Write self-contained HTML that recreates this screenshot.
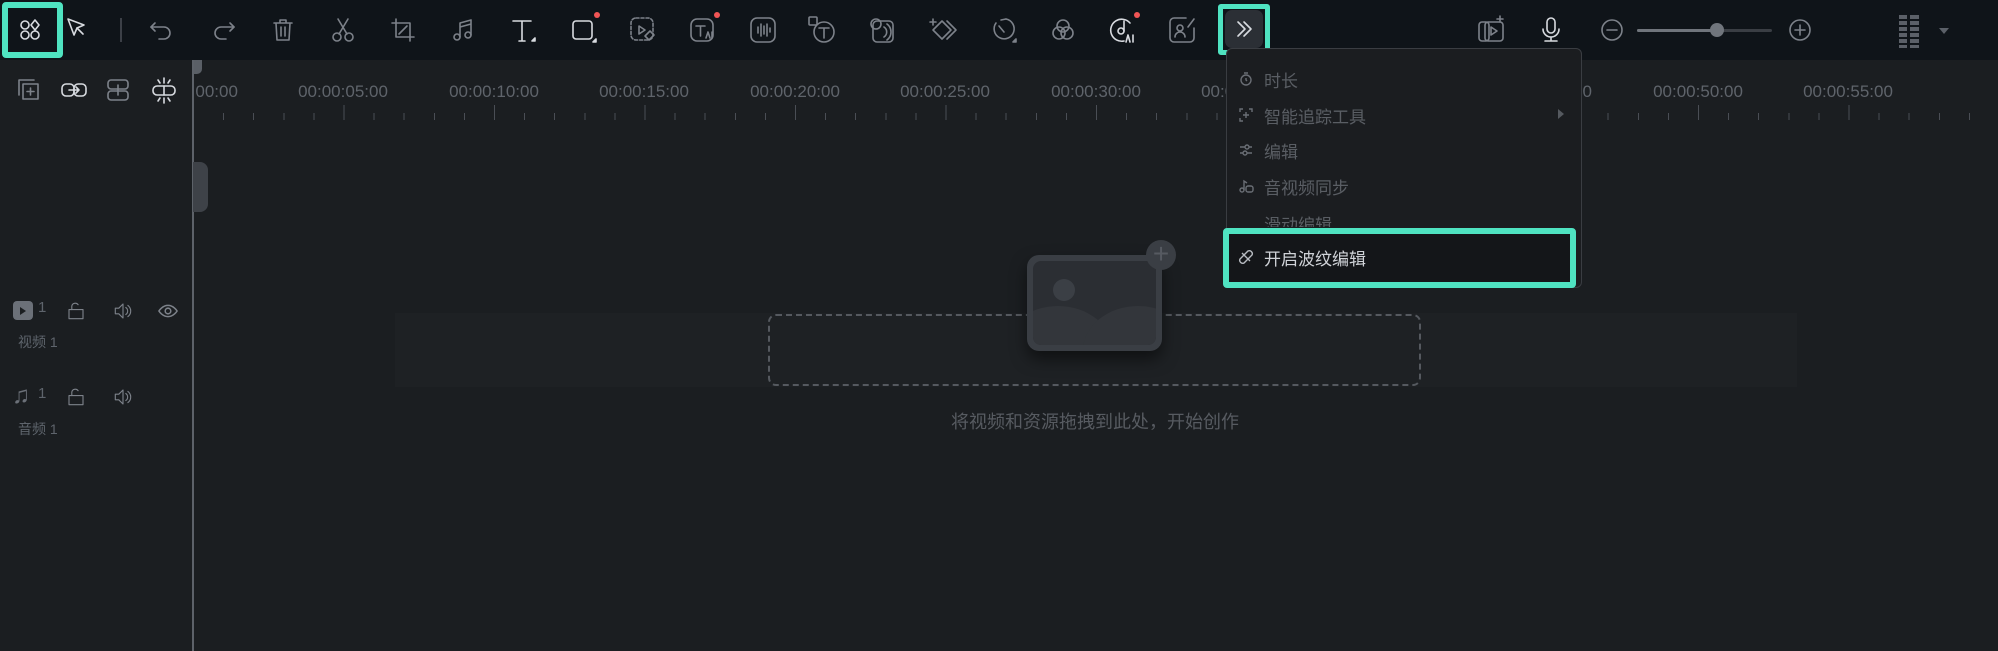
<!DOCTYPE html>
<html><head><meta charset="utf-8"><style>
*{margin:0;padding:0;box-sizing:border-box}
body{width:1998px;height:651px;background:#1b1e21;overflow:hidden;position:relative;font-family:"Liberation Sans","Noto Sans CJK SC",sans-serif}
.tb{position:absolute;left:0;top:0;width:1998px;height:60px;background:#0f1419}
.ic{position:absolute;width:30px;height:30px}
.ic svg{width:30px;height:30px;fill:none;stroke:#7d828a;stroke-width:1.6;stroke-linecap:round;stroke-linejoin:round}
.w svg{stroke:#d8dbe0}
.dot{position:absolute;width:6px;height:6px;border-radius:50%;background:#f05555}
.lbl{position:absolute;top:22px;color:#5f646b;font-size:17px;width:120px;text-align:center}
.menu{position:absolute;left:1226px;top:48px;width:356px;height:240px;background:#1b1d20;border:1px solid #3a3d42;border-radius:6px}
.mi{position:absolute;left:1264px;color:#5a5e64;font-size:17px}
.mic{position:absolute;left:1238px;width:16px;height:16px}
.mic svg{width:16px;height:16px;fill:none;stroke:#6a6e75;stroke-width:1.4}
.trk{position:absolute;color:#5e646c;font-size:14px}
</style></head><body>
<div class="tb"></div>
<div style="position:absolute;left:2px;top:2px;width:61px;height:56px;border:6px solid #4fe3c1;border-radius:4px;background:#0f1419"></div>
<div class="ic w" style="left:15px;top:15px"><svg viewBox="0 0 30 30"><circle cx="10" cy="10" r="4"/><path d="M20 5l4 5-4 5-4-5z"/><circle cx="10" cy="20" r="4"/><circle cx="20" cy="20" r="4"/></svg></div>
<div class="ic w" style="left:64px;top:15px"><svg viewBox="0 0 30 30"><path d="M4 4l16 6-7 3-3 7z"/><path d="M13 13l6 6"/></svg></div>
<div style="position:absolute;left:120px;top:18px;width:2px;height:24px;background:#3c4047"></div>
<div class="ic" style="left:147px;top:15px"><svg viewBox="0 0 30 30"><path d="M8 8l-4 4 4 4"/><path d="M4 12h13a6 6 0 010 12h-5"/></svg></div>
<div class="ic" style="left:208px;top:15px"><svg viewBox="0 0 30 30"><path d="M22 8l4 4-4 4"/><path d="M26 12H13a6 6 0 000 12h5"/></svg></div>
<div class="ic" style="left:268px;top:15px"><svg viewBox="0 0 30 30"><path d="M6 8h18M12 8V5h6v3M8 8l1 17h12l1-17M13 12v9M17 12v9"/></svg></div>
<div class="ic" style="left:328px;top:15px"><svg viewBox="0 0 30 30"><circle cx="9" cy="22" r="4"/><circle cx="21" cy="22" r="4"/><path d="M11 19L20 4M19 19L10 4"/></svg></div>
<div class="ic" style="left:388px;top:15px"><svg viewBox="0 0 30 30"><path d="M8 4v18h18M4 8h18v18M11 19l8-8"/></svg></div>
<div class="ic" style="left:448px;top:15px"><svg viewBox="0 0 30 30"><circle cx="9" cy="22" r="3"/><circle cx="20" cy="20" r="3"/><path d="M12 22V8l11-3v15M12 12l11-3"/></svg></div>
<div class="ic w" style="left:508px;top:15px"><svg viewBox="0 0 30 30"><path d="M5 6h18M14 6v20M11 26h6"/><path d="M24 26l3-3v3z" fill="#d8dbe0"/></svg></div>
<div class="ic w" style="left:569px;top:15px"><svg viewBox="0 0 30 30"><rect x="4" y="6" width="19" height="18" rx="3"/><path d="M24 27l3-3v3z" fill="#d8dbe0"/></svg></div>
<div class="dot" style="left:594px;top:12px"></div>
<div class="ic" style="left:628px;top:15px"><svg viewBox="0 0 30 30"><rect x="3" y="3" width="22" height="22" rx="5" stroke-dasharray="3 2"/><path d="M11 11l6 4-6 4z"/><path d="M17 21l5-5 4 4-5 5z"/></svg></div>
<div class="ic" style="left:688px;top:15px"><svg viewBox="0 0 30 30"><rect x="3" y="4" width="22" height="22" rx="6"/><path d="M8 11h9M12.5 11v10"/><path d="M18 23l2-6 2 6M24 17v6"/></svg></div>
<div class="dot" style="left:714px;top:12px"></div>
<div class="ic" style="left:748px;top:15px"><svg viewBox="0 0 30 30"><rect x="3" y="3" width="24" height="24" rx="6"/><path d="M10 12v6M13 9v12M16 11v8M19 9v12M22 13v4"/></svg></div>
<div class="ic" style="left:807px;top:15px"><svg viewBox="0 0 30 30"><rect x="2" y="2" width="8" height="8" rx="1"/><circle cx="17" cy="17" r="10"/><path d="M12 13h10M17 13v10"/></svg></div>
<div class="ic" style="left:867px;top:15px"><svg viewBox="0 0 30 30"><circle cx="9" cy="9" r="5"/><rect x="6" y="6" width="20" height="21" rx="4"/><path d="M17 12a6 6 0 010 10M20 9a10 10 0 010 16"/></svg></div>
<div class="ic" style="left:928px;top:15px"><svg viewBox="0 0 30 30"><path d="M5 4v6M2 7h6"/><path d="M14 6l9 9-9 9-9-9z"/><path d="M19 6l9 9-9 9"/></svg></div>
<div class="ic" style="left:988px;top:15px"><svg viewBox="0 0 30 30"><path d="M8 8a10 10 0 1010-4"/><path d="M13 5l5-1"/><path d="M11 11l5 6"/><path d="M25 27l3-3v3z" fill="#7d828a"/></svg></div>
<div class="ic" style="left:1048px;top:15px"><svg viewBox="0 0 30 30"><circle cx="15" cy="11" r="6"/><circle cx="11" cy="18" r="6"/><circle cx="19" cy="18" r="6"/></svg></div>
<div class="ic w" style="left:1108px;top:15px"><svg viewBox="0 0 30 30"><path d="M22 8A11 11 0 1016 26"/><circle cx="13" cy="16" r="3"/><path d="M16 16V6"/><path d="M18 27l2-7 2 7M25 20v7"/></svg></div>
<div class="dot" style="left:1134px;top:12px"></div>
<div class="ic" style="left:1167px;top:15px"><svg viewBox="0 0 30 30"><path d="M19 3H7a4 4 0 00-4 4v16a4 4 0 004 4h16a4 4 0 004-4V13"/><circle cx="13" cy="13" r="3"/><path d="M8 22a5 5 0 0110 0M21 12l6-8"/></svg></div>
<div style="position:absolute;left:1218px;top:4px;width:52px;height:51px;border:5px solid #4fe3c1;border-radius:3px;background:#0f1419"></div>
<div style="position:absolute;left:1225px;top:10px;width:38px;height:38px;border-radius:7px;background:#2b2f35"></div>
<div class="ic w" style="left:1229px;top:14px"><svg viewBox="0 0 30 30"><path d="M9 8l7 7-7 7M15 8l7 7-7 7"/></svg></div>
<div class="ic" style="left:1476px;top:15px"><svg viewBox="0 0 30 30"><rect x="3" y="7" width="10" height="19" rx="3"/><rect x="9" y="7" width="18" height="19" rx="3"/><path d="M15 12l6 4-6 4z M24 1v6M21 4h6"/></svg></div>
<div class="ic w" style="left:1536px;top:15px"><svg viewBox="0 0 30 30"><rect x="11" y="3" width="8" height="15" rx="4"/><path d="M7 14a8 8 0 0016 0M15 22v3M9 26h12"/></svg></div>
<div class="ic" style="left:1597px;top:15px"><svg viewBox="0 0 30 30"><circle cx="15" cy="15" r="10"/><path d="M10 15h10"/></svg></div>
<div style="position:absolute;left:1637px;top:29px;width:135px;height:3px;background:#3a3e44;border-radius:2px"></div>
<div style="position:absolute;left:1637px;top:29px;width:80px;height:3px;background:#70757c;border-radius:2px"></div>
<div style="position:absolute;left:1710px;top:23px;width:14px;height:14px;border-radius:50%;background:#70757c"></div>
<div class="ic" style="left:1785px;top:15px"><svg viewBox="0 0 30 30"><circle cx="15" cy="15" r="10"/><path d="M10 15h10M15 10v10"/></svg></div>
<div style="position:absolute;left:1899px;top:15px;width:20px;height:33px;background:repeating-linear-gradient(#5b6068 0 4px,transparent 4px 6px);"><div style="position:absolute;left:8px;top:0;width:3px;height:33px;background:#0f1419"></div></div>
<div style="position:absolute;left:1939px;top:28px;border:5px solid transparent;border-top:6px solid #5b6068"></div>
<div class="ic" style="left:14px;top:75px"><svg viewBox="0 0 30 30"><path d="M5 20V5h15"/><rect x="9" y="9" width="15" height="15"/><path d="M16.5 13v7M13 16.5h7"/></svg></div>
<div class="ic w" style="left:59px;top:75px"><svg viewBox="0 0 30 30"><rect x="3" y="9" width="12" height="12" rx="4"/><rect x="15" y="9" width="12" height="12" rx="4"/><path d="M10 15h10M17 12l3 3-3 3"/></svg></div>
<div class="ic" style="left:104px;top:75px"><svg viewBox="0 0 30 30"><rect x="4" y="5" width="20" height="9" rx="3"/><rect x="4" y="16" width="20" height="9" rx="3"/><path d="M14 10v10"/></svg></div>
<div class="ic w" style="left:149px;top:75px"><svg viewBox="0 0 30 30"><rect x="4" y="11" width="22" height="9" rx="4"/><path d="M15 11v9M15 3v5M15 23v5M9 5l2 3M21 5l-2 3M9 26l2-3M21 26l-2-3"/></svg></div>
<div style="position:absolute;left:193px;top:60px;width:1805px;height:70px;overflow:hidden">
<div style="position:absolute;left:0;top:0;width:9px;height:14px;background:#5a5f66;border-radius:0 0 5px 0"></div>
<div class="lbl" style="left:-60px">00:00:00:00</div>
<div class="lbl" style="left:90px">00:00:05:00</div>
<div class="lbl" style="left:241px">00:00:10:00</div>
<div class="lbl" style="left:391px">00:00:15:00</div>
<div class="lbl" style="left:542px">00:00:20:00</div>
<div class="lbl" style="left:692px">00:00:25:00</div>
<div class="lbl" style="left:843px">00:00:30:00</div>
<div class="lbl" style="left:993px">00:00:35:00</div>
<div class="lbl" style="left:1144px">00:00:40:00</div>
<div class="lbl" style="left:1294px">00:00:45:00</div>
<div class="lbl" style="left:1445px">00:00:50:00</div>
<div class="lbl" style="left:1595px">00:00:55:00</div>
<div style="position:absolute;left:0;top:53px;width:1805px;height:7px;background:repeating-linear-gradient(90deg,#4a4e55 0 1px,transparent 1px 30.1px)"></div>
<div style="position:absolute;left:0;top:45px;width:1805px;height:15px;background:repeating-linear-gradient(90deg,#4a4e55 0 1px,transparent 1px 150.5px)"></div>
</div>
<div style="position:absolute;left:192px;top:60px;width:2px;height:591px;background:#5d6269"></div>
<div style="position:absolute;left:193px;top:162px;width:15px;height:50px;background:#3e4248;border-radius:0 8px 8px 0"></div>
<div style="position:absolute;left:13px;top:301px;width:20px;height:19px;border-radius:4px;background:#6b7078"></div>
<div style="position:absolute;left:20px;top:307px;border:4px solid transparent;border-left:6px solid #1b1e21"></div>
<div class="trk" style="left:38px;top:299px;font-size:15px">1</div>
<div class="ic" style="left:61px;top:296px;transform:scale(.7)"><svg viewBox="0 0 30 30"><rect x="5" y="13" width="20" height="13"/><path d="M9 13V8a5 5 0 019-2"/></svg></div>
<div class="ic" style="left:108px;top:296px;transform:scale(.7)"><svg viewBox="0 0 30 30"><path d="M4 11h5l6-6v20l-6-6H4z M19 10a6 6 0 010 10M22 7a10 10 0 010 16"/></svg></div>
<div class="ic" style="left:153px;top:296px;transform:scale(.7)"><svg viewBox="0 0 30 30" style="stroke-width:2.2"><path d="M2 15s5-8 13-8 13 8 13 8-5 8-13 8S2 15 2 15z"/><circle cx="15" cy="15" r="4"/></svg></div>
<div class="trk" style="left:18px;top:332px">视频 1</div>
<div style="position:absolute;left:12px;top:383px;font-size:24px;color:#6b7078;line-height:26px">♫</div>
<div class="trk" style="left:38px;top:385px;font-size:15px">1</div>
<div class="ic" style="left:61px;top:382px;transform:scale(.7)"><svg viewBox="0 0 30 30"><rect x="5" y="13" width="20" height="13"/><path d="M9 13V8a5 5 0 019-2"/></svg></div>
<div class="ic" style="left:108px;top:382px;transform:scale(.7)"><svg viewBox="0 0 30 30"><path d="M4 11h5l6-6v20l-6-6H4z M19 10a6 6 0 010 10M22 7a10 10 0 010 16"/></svg></div>
<div class="trk" style="left:18px;top:419px">音频 1</div>
<div style="position:absolute;left:395px;top:313px;width:1402px;height:74px;background:#1e2124"></div>
<div style="position:absolute;left:768px;top:314px;width:653px;height:72px;border:2px dashed #55595f;border-radius:8px"></div>
<div style="position:absolute;left:1027px;top:255px;width:135px;height:96px;border-radius:12px;background:#3a3e44;box-shadow:0 8px 16px rgba(0,0,0,.5)"></div>
<div style="position:absolute;left:1033px;top:261px;width:123px;height:84px;border-radius:8px;background:#2b2e33;overflow:hidden">
<div style="position:absolute;left:20px;top:18px;width:22px;height:22px;border-radius:50%;background:#3b3f45"></div>
<div style="position:absolute;left:-30px;top:45px;width:110px;height:90px;border-radius:50%;background:#33363b"></div>
<div style="position:absolute;left:50px;top:45px;width:110px;height:90px;border-radius:50%;background:#33363b"></div>
</div>
<div style="position:absolute;left:1146px;top:240px;width:30px;height:30px;border-radius:50%;background:#3a3e44;color:#565a61;font-size:28px;line-height:28px;text-align:center">+</div>
<div style="position:absolute;left:900px;top:408px;width:390px;text-align:center;color:#575b61;font-size:18px">将视频和资源拖拽到此处，开始创作</div>
<div class="menu"></div>
<div style="position:absolute;left:1558px;top:109px;border:5px solid transparent;border-left:6px solid #55595f"></div>
<div class="mic" style="top:71px"><svg viewBox="0 0 16 16"><circle cx="8" cy="9" r="5"/><path d="M6 2h4M8 7v2l1 1"/></svg></div><div class="mi" style="top:67px">时长</div>
<div class="mic" style="top:107px"><svg viewBox="0 0 16 16"><path d="M2 5V2h3M11 2h3v3M2 11v3h3M8 5v6M5 8h6"/></svg></div><div class="mi" style="top:103px">智能追踪工具</div>
<div class="mic" style="top:142px"><svg viewBox="0 0 16 16"><path d="M2 5h5M11 5h3M2 11h3M9 11h5"/><circle cx="9" cy="5" r="2"/><circle cx="7" cy="11" r="2"/></svg></div><div class="mi" style="top:138px">编辑</div>
<div class="mic" style="top:178px"><svg viewBox="0 0 16 16"><circle cx="4" cy="12" r="2"/><path d="M6 12V3l3 2"/><rect x="8" y="8" width="7" height="6" rx="2"/></svg></div><div class="mi" style="top:174px">音视频同步</div>
<div style="position:absolute;left:1226px;top:210px;width:350px;height:17px;overflow:hidden"><div class="mi" style="left:38px;top:1px">滑动编辑</div></div>
<div style="position:absolute;left:1223px;top:228px;width:353px;height:60px;border:6px solid #4fe3c1;border-radius:4px;background:#141619"></div>
<div class="mic" style="top:249px"><svg viewBox="0 0 16 16" style="stroke:#b8bcc2"><path d="M10 2a3 3 0 014 4l-8 8a3 3 0 01-4-4z M4 4l8 8"/></svg></div>
<div class="mi" style="top:245px;color:#d0d3d8">开启波纹编辑</div>
</body></html>
